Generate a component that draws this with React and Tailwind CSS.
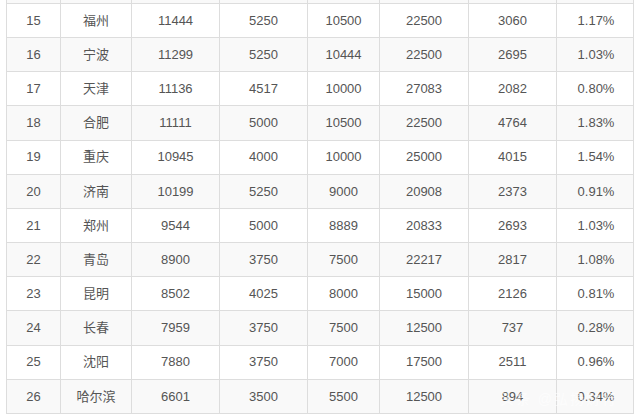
import React from 'react';

const rows = [
  ['15', '福州', '11444', '5250', '10500', '22500', '3060', '1.17%'],
  ['16', '宁波', '11299', '5250', '10444', '22500', '2695', '1.03%'],
  ['17', '天津', '11136', '4517', '10000', '27083', '2082', '0.80%'],
  ['18', '合肥', '11111', '5000', '10500', '22500', '4764', '1.83%'],
  ['19', '重庆', '10945', '4000', '10000', '25000', '4015', '1.54%'],
  ['20', '济南', '10199', '5250', '9000', '20908', '2373', '0.91%'],
  ['21', '郑州', '9544', '5000', '8889', '20833', '2693', '1.03%'],
  ['22', '青岛', '8900', '3750', '7500', '22217', '2817', '1.08%'],
  ['23', '昆明', '8502', '4025', '8000', '15000', '2126', '0.81%'],
  ['24', '长春', '7959', '3750', '7500', '12500', '737', '0.28%'],
  ['25', '沈阳', '7880', '3750', '7000', '17500', '2511', '0.96%'],
  ['26', '哈尔滨', '6601', '3500', '5500', '12500', '894', '0.34%'],
];

// column widths measured off the screenshot
const cols = 'grid grid-cols-[54px_71px_88px_88px_72px_89px_88px_78px]';

function Row({ cells, striped }) {
  return (
    <div className={`${cols} h-[34.17px] border-b border-[#dddddd] ${striped ? 'bg-[#f9f9f9]' : 'bg-white'}`}>
      {cells.map((c, i) => (
        <div
          key={i}
          className={`flex items-center justify-center ${i < 7 ? 'border-r border-[#dddddd]' : ''}`}
        >
          {c}
        </div>
      ))}
    </div>
  );
}

export default function App() {
  return (
    <div
      className="relative w-[640px] h-[420px] overflow-hidden bg-white pl-[6px] text-[13px] text-[#555555]"
      style={{ fontFamily: '"Liberation Sans", Arial, "Noto Sans CJK SC", sans-serif' }}
    >
      <div className="w-[628px] border-l border-r border-[#dddddd]">
        {/* tail of the previous row, cut off by the crop */}
        <div className={`${cols} h-[4px] border-b border-[#dddddd] bg-[#f9f9f9]`}>
          {[0, 1, 2, 3, 4, 5, 6, 7].map(i => (
            <div key={i} className={i < 7 ? 'border-r border-[#dddddd]' : ''} />
          ))}
        </div>
        {rows.map((r, idx) => (
          <Row key={r[0]} cells={r} striped={idx % 2 === 1} />
        ))}
      </div>

      {/* faint watermark over the last row */}
      <div className="absolute right-[22px] bottom-[10px] text-[14px] text-white/60 tracking-[2px]">
        头条 @弘扬财行
      </div>
    </div>
  );
}
